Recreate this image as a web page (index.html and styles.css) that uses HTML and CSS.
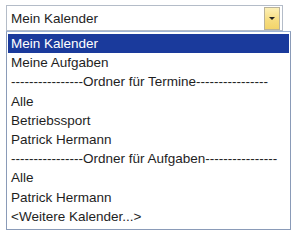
FILE: index.html
```html
<!DOCTYPE html>
<html lang="de">
<head>
    <meta charset="UTF-8">
    <title>Kalender</title>
    <link rel="stylesheet" href="styles.css">
</head>
<body>
    <div class="combo">
        <span class="combo-text">Mein Kalender</span>
        <span class="combo-btn"><span class="arrow"></span></span>
    </div>
    <ul class="list">
        <li class="selected">Mein Kalender</li>
        <li>Meine Aufgaben</li>
        <li>----------------Ordner für Termine----------------</li>
        <li>Alle</li>
        <li>Betriebssport</li>
        <li>Patrick Hermann</li>
        <li>----------------Ordner für Aufgaben----------------</li>
        <li>Alle</li>
        <li>Patrick Hermann</li>
        <li>&lt;Weitere Kalender...&gt;</li>
    </ul>
</body>
</html>
```

FILE: styles.css
```css
body {
    margin: 0;
    background: #fff;
    font-family: "Liberation Sans", Arial, sans-serif;
    font-size: 13.5px;
    color: #1e1e1e;
}
.combo {
    display: flex;
    align-items: center;
    justify-content: space-between;
    box-sizing: border-box;
    width: 277px;
    height: 26px;
    margin: 5px 0 0 6px;
    padding: 1px 2px 1px 4px;
    border: 1px solid #b4bcc8;
}
.combo-btn {
    display: flex;
    align-items: center;
    justify-content: center;
    box-sizing: border-box;
    width: 16px;
    height: 23px;
    border: 1px solid #b9b29a;
    background: linear-gradient(#fdf0b6, #f6dc7e 60%, #f3d46a);
}
.arrow {
    width: 0;
    height: 0;
    border-left: 3px solid transparent;
    border-right: 3px solid transparent;
    border-top: 3px solid #222;
}
.list {
    list-style: none;
    box-sizing: border-box;
    width: 285px;
    height: 199px;
    margin: 0 0 0 6px;
    padding: 2px 1px;
    border: 1px solid #8a9bb8;
    border-top-color: #9fb4d6;
    overflow: hidden;
}
.list li {
    height: 19.2px;
    line-height: 19px;
    padding-left: 3px;
    white-space: nowrap;
}
.list li.selected {
    background: #1a3a9c;
    color: #fff;
}
```
